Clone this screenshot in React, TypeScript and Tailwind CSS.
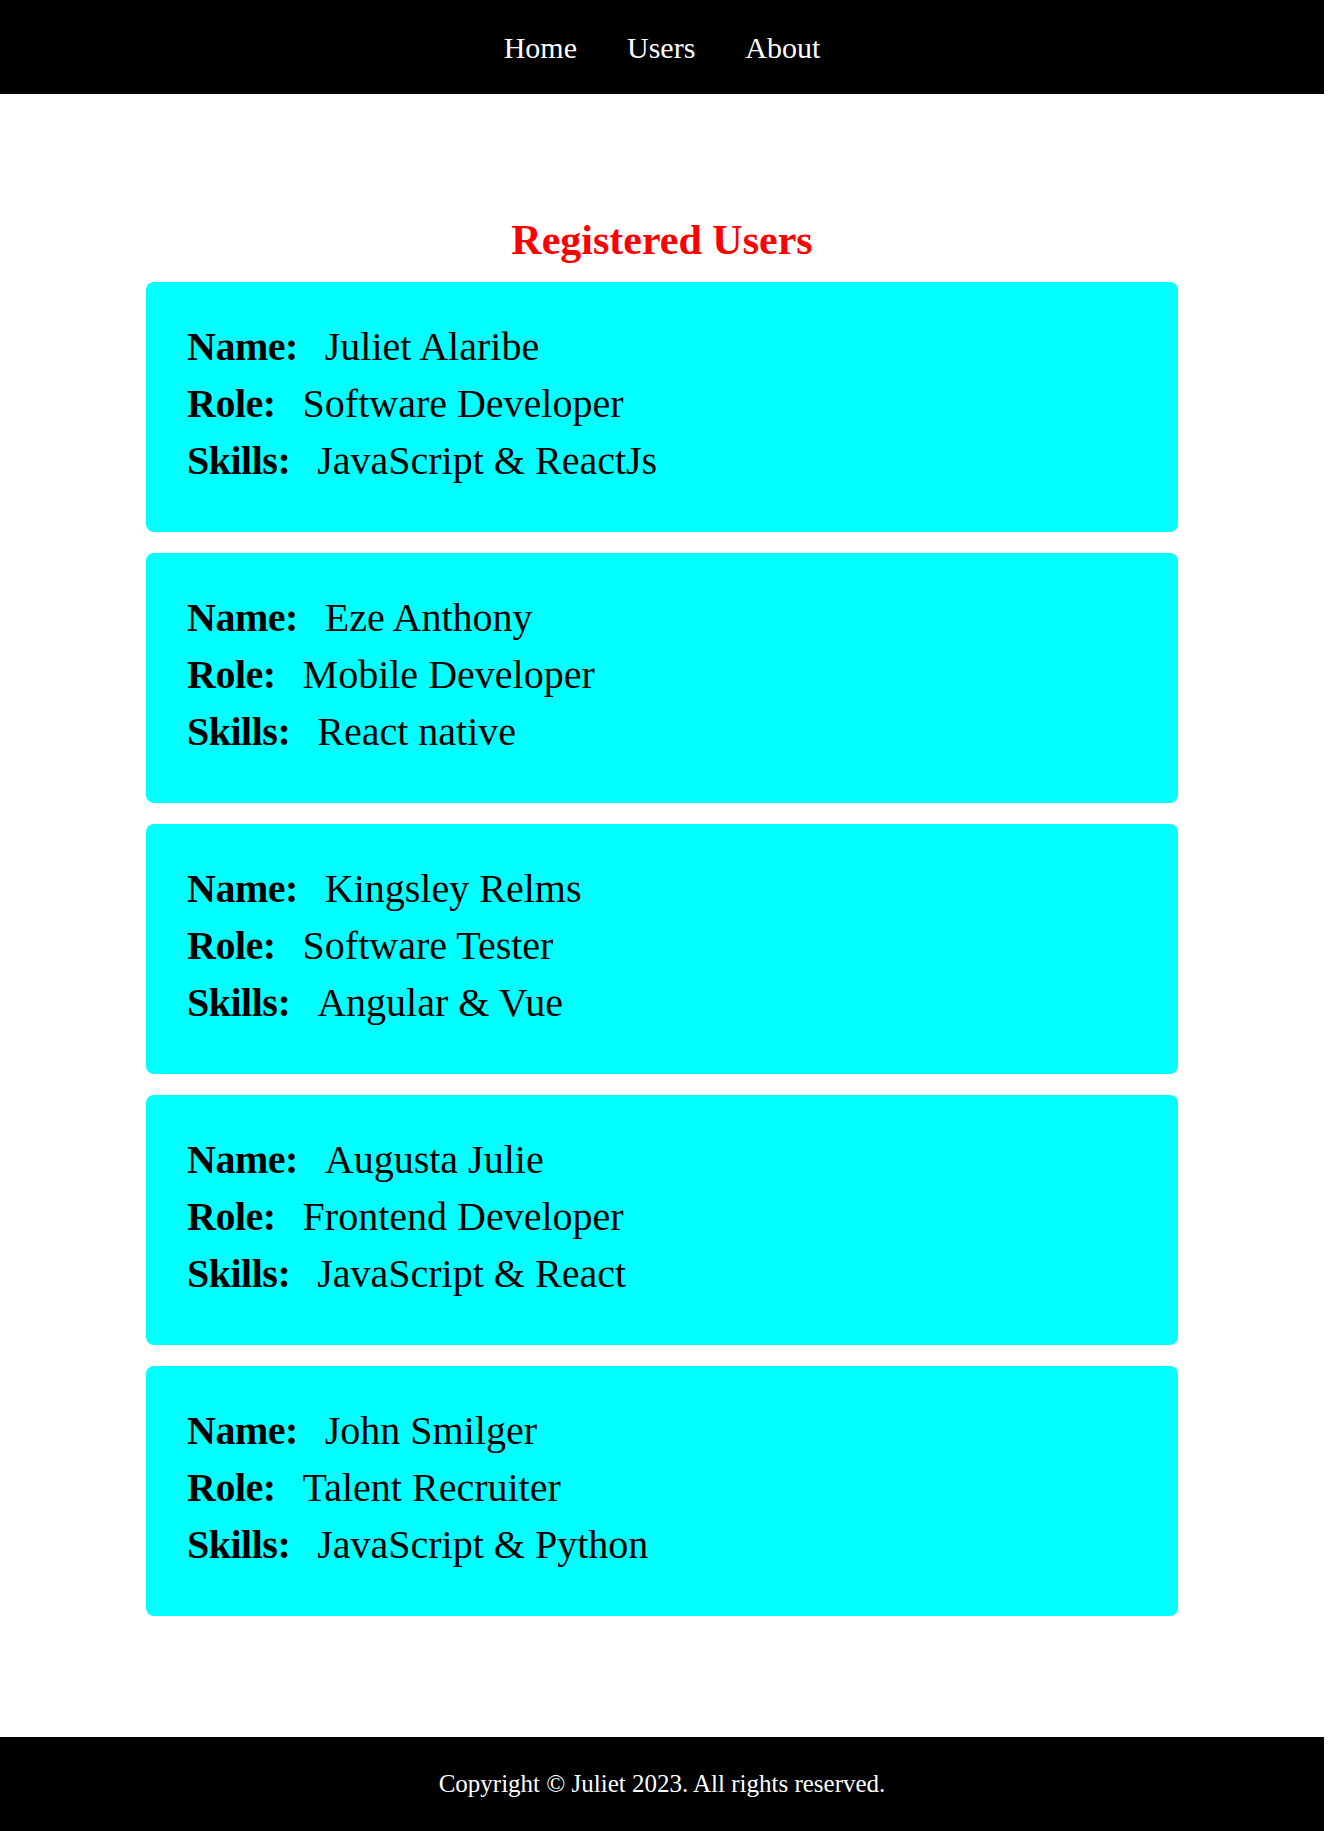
import React from "react";

interface userType {
  name: string;
  role: string;
  skills: string;
}

const users: userType[] = [
  { name: "Juliet Alaribe", role: "Software Developer", skills: "JavaScript & ReactJs" },
  { name: "Eze Anthony", role: "Mobile Developer", skills: "React native" },
  { name: "Kingsley Relms", role: "Software Tester", skills: "Angular & Vue" },
  { name: "Augusta Julie", role: "Frontend Developer", skills: "JavaScript & React" },
  { name: "John Smilger", role: "Talent Recruiter", skills: "JavaScript & Python" },
];

function Row({ label, value }: { label: string; value: string }) {
  return (
    <div className="flex h-[56.7px] items-center">
      <span className="font-bold tracking-[-0.5px]">{label}</span>
      <span className="ml-[27px]">{value}</span>
    </div>
  );
}

export default function App() {
  return (
    <div className="min-h-[1831px] bg-white font-['Liberation_Serif',_'Times_New_Roman',_serif]">
      <div className="flex w-[1324px] flex-col">
        <header className="flex h-[94px] items-center justify-center bg-black">
          <nav className="flex gap-[50px] text-[30px] text-white">
            <a href="#">Home</a>
            <a href="#">Users</a>
            <a href="#">About</a>
          </nav>
        </header>

        <main className="flex flex-col items-center pt-[123px] pb-[121px]">
          <h1 className="mb-[19px] text-[42px] font-bold leading-[46px] text-[#ff0000]">
            Registered Users
          </h1>
          <div className="flex w-[1032px] flex-col gap-[21px]">
            {users.map((user) => (
              <div
                key={user.name}
                className="flex h-[250px] flex-col justify-center rounded-[8px] bg-[#00ffff] px-[41px] pb-[6px] text-[40px] text-black"
              >
                <Row label="Name:" value={user.name} />
                <Row label="Role:" value={user.role} />
                <Row label="Skills:" value={user.skills} />
              </div>
            ))}
          </div>
        </main>

        <footer className="flex h-[94px] items-center justify-center bg-black text-[25px] text-white">
          Copyright © Juliet 2023. All rights reserved.
        </footer>
      </div>
    </div>
  );
}
